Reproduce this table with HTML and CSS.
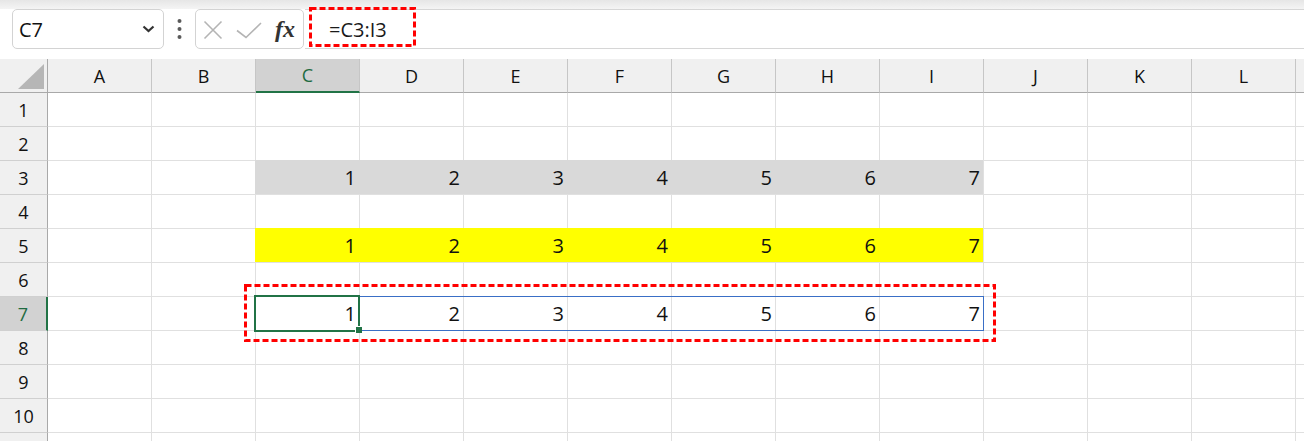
FILE: index.html
```html
<!DOCTYPE html>
<html lang="en">
<head>
    <meta charset="UTF-8">
    <title>Spill range</title>
    <link rel="stylesheet" href="styles.css">
</head>
<body>
    <div class="ribbon"></div>

    <div class="fbar">
        <div class="namebox">
            <span>C7</span>
            <svg class="chev" width="13" height="8" viewBox="0 0 13 8"><path d="M1.5 1.5 L6.5 6 L11.5 1.5" fill="none" stroke="#333" stroke-width="2.2"/></svg>
        </div>
        <div class="more">
            <svg width="5" height="22" viewBox="0 0 5 22"><circle cx="2.5" cy="3" r="2" fill="#5a5a5a"/><circle cx="2.5" cy="11" r="2" fill="#5a5a5a"/><circle cx="2.5" cy="19" r="2" fill="#5a5a5a"/></svg>
        </div>
        <div class="fxbox">
            <svg width="70" height="38" viewBox="0 0 70 38"><path d="M8.5 11.5 L25.5 28.5 M25.5 11.5 L8.5 28.5" stroke="#b4b4b4" stroke-width="1.6" fill="none"/><path d="M41 20.5 L50 27.5 L65 13" stroke="#b4b4b4" stroke-width="1.6" fill="none"/></svg>
            <span class="fx">fx</span>
        </div>
        <div class="formula">=C3:I3</div>
        <!-- annotation around the formula -->
        <svg class="mark mark-formula" width="107" height="40" viewBox="0 0 107 40"><rect x="1.5" y="1.5" width="104" height="37" fill="none" stroke="#ff0000" stroke-width="3" stroke-dasharray="6 3"/></svg>
    </div>

    <div class="gap"></div>

    <div class="sheet">
        <div class="corner"><span class="tri"></span></div>
        <div class="colh">A</div><div class="colh">B</div><div class="colh sel">C</div><div class="colh">D</div><div class="colh">E</div><div class="colh">F</div><div class="colh">G</div><div class="colh">H</div><div class="colh">I</div><div class="colh">J</div><div class="colh">K</div><div class="colh">L</div><div class="colh"></div>

        <div class="rowh">1</div><div class="c"></div><div class="c"></div><div class="c"></div><div class="c"></div><div class="c"></div><div class="c"></div><div class="c"></div><div class="c"></div><div class="c"></div><div class="c"></div><div class="c"></div><div class="c"></div><div class="c"></div>

        <div class="rowh">2</div><div class="c"></div><div class="c"></div><div class="c"></div><div class="c"></div><div class="c"></div><div class="c"></div><div class="c"></div><div class="c"></div><div class="c"></div><div class="c"></div><div class="c"></div><div class="c"></div><div class="c"></div>

        <div class="rowh">3</div><div class="c"></div><div class="c"></div><div class="c gray">1</div><div class="c gray">2</div><div class="c gray">3</div><div class="c gray">4</div><div class="c gray">5</div><div class="c gray">6</div><div class="c gray">7</div><div class="c"></div><div class="c"></div><div class="c"></div><div class="c"></div>

        <div class="rowh">4</div><div class="c"></div><div class="c"></div><div class="c"></div><div class="c"></div><div class="c"></div><div class="c"></div><div class="c"></div><div class="c"></div><div class="c"></div><div class="c"></div><div class="c"></div><div class="c"></div><div class="c"></div>

        <div class="rowh">5</div><div class="c"></div><div class="c"></div><div class="c yellow">1</div><div class="c yellow">2</div><div class="c yellow">3</div><div class="c yellow">4</div><div class="c yellow">5</div><div class="c yellow">6</div><div class="c yellow">7</div><div class="c"></div><div class="c"></div><div class="c"></div><div class="c"></div>

        <div class="rowh">6</div><div class="c"></div><div class="c"></div><div class="c"></div><div class="c"></div><div class="c"></div><div class="c"></div><div class="c"></div><div class="c"></div><div class="c"></div><div class="c"></div><div class="c"></div><div class="c"></div><div class="c"></div>

        <div class="rowh sel">7</div><div class="c"></div><div class="c"></div><div class="c">1</div><div class="c">2</div><div class="c">3</div><div class="c">4</div><div class="c">5</div><div class="c">6</div><div class="c">7</div><div class="c"></div><div class="c"></div><div class="c"></div><div class="c"></div>

        <div class="rowh">8</div><div class="c"></div><div class="c"></div><div class="c"></div><div class="c"></div><div class="c"></div><div class="c"></div><div class="c"></div><div class="c"></div><div class="c"></div><div class="c"></div><div class="c"></div><div class="c"></div><div class="c"></div>

        <div class="rowh">9</div><div class="c"></div><div class="c"></div><div class="c"></div><div class="c"></div><div class="c"></div><div class="c"></div><div class="c"></div><div class="c"></div><div class="c"></div><div class="c"></div><div class="c"></div><div class="c"></div><div class="c"></div>

        <div class="rowh">10</div><div class="c"></div><div class="c"></div><div class="c"></div><div class="c"></div><div class="c"></div><div class="c"></div><div class="c"></div><div class="c"></div><div class="c"></div><div class="c"></div><div class="c"></div><div class="c"></div><div class="c"></div>

        <div class="rowh"></div><div class="c"></div><div class="c"></div><div class="c"></div><div class="c"></div><div class="c"></div><div class="c"></div><div class="c"></div><div class="c"></div><div class="c"></div><div class="c"></div><div class="c"></div><div class="c"></div><div class="c"></div>

        <!-- spill range, active cell, annotation -->
        <div class="spill"></div>
        <div class="active"></div>
        <div class="handle"></div>
        <svg class="mark mark-range" width="752" height="58" viewBox="0 0 752 58"><rect x="1.5" y="1.5" width="749" height="55" fill="none" stroke="#ff0000" stroke-width="3" stroke-dasharray="6 3"/></svg>
    </div>
</body>
</html>
```

FILE: styles.css
```css
html, body {
    margin: 0;
    padding: 0;
    background: #ffffff;
    overflow: hidden;
}

body {
    width: 1304px;
    height: 441px;
    font-family: "Open Sans", "Noto Sans", sans-serif;
    color: #111;
}

.ribbon {
    height: 9px;
    background: linear-gradient(#e6e6e6, #f4f4f4);
}

/* formula bar */
.fbar {
    position: relative;
    display: flex;
    height: 40px;
    background: #ffffff;
}

.namebox {
    box-sizing: border-box;
    width: 152px;
    margin-left: 12px;
    display: flex;
    align-items: center;
    padding: 0 8px 0 6px;
    border: 1px solid #d3d3d3;
    border-radius: 5px;
    font-size: 20px;
}

.chev {
    margin-left: auto;
}

.more {
    width: 31px;
    display: flex;
    align-items: center;
    justify-content: center;
}

.fxbox {
    box-sizing: border-box;
    width: 109px;
    display: flex;
    align-items: center;
    border: 1px solid #d3d3d3;
    border-radius: 5px;
}

.fx {
    margin-left: 9px;
    font-family: "Liberation Serif", serif;
    font-style: italic;
    font-weight: bold;
    font-size: 24px;
    color: #333;
}

.formula {
    flex: 1;
    margin-left: 1px;
    padding-left: 24px;
    display: flex;
    align-items: center;
    border-top: 1px solid #d6d6d6;
    border-bottom: 1px solid #d6d6d6;
    font-size: 20px;
    color: #1a1a1a;
}

.mark {
    position: absolute;
}

.mark-formula {
    left: 309px;
    top: -2px;
}

.gap {
    height: 10px;
}

/* grid */
.sheet {
    position: relative;
    display: grid;
    grid-template-columns: 48px repeat(13, 104px);
    grid-auto-rows: 34px;
}

.corner, .colh, .rowh, .c {
    box-sizing: border-box;
}

.corner {
    position: relative;
    background: #f0f0f0;
    border-right: 1px solid #a9a9a9;
    border-bottom: 1px solid #a9a9a9;
}

.tri {
    position: absolute;
    right: 3px;
    bottom: 3px;
    width: 26px;
    height: 25px;
    background: #b6b6b6;
    clip-path: polygon(100% 0, 100% 100%, 0 100%);
}

.colh {
    display: flex;
    align-items: center;
    justify-content: center;
    background: #f0f0f0;
    border-right: 1px solid #c6c6c6;
    border-bottom: 1px solid #a9a9a9;
    font-size: 18px;
}

.colh.sel {
    background: #d2d2d2;
    color: #1e6b41;
    border-bottom: 2px solid #217346;
}

.rowh {
    display: flex;
    align-items: center;
    justify-content: center;
    background: #f0f0f0;
    border-right: 1px solid #a9a9a9;
    border-bottom: 1px solid #d0d0d0;
    font-size: 18px;
}

.rowh.sel {
    background: #d2d2d2;
    color: #1e6b41;
    border-right: 2px solid #217346;
}

.c {
    display: flex;
    align-items: center;
    justify-content: flex-end;
    padding-right: 3px;
    border-right: 1px solid #e0e0e0;
    border-bottom: 1px solid #e0e0e0;
    font-size: 20px;
    color: #111;
}

.c.gray {
    background: #d9d9d9;
    box-shadow: -1px -1px 0 #d9d9d9;
}

.c.yellow {
    background: #ffff00;
    box-shadow: -1px -1px 0 #ffff00;
}

.spill {
    position: absolute;
    left: 255px;
    top: 237px;
    width: 729px;
    height: 35px;
    box-sizing: border-box;
    border: 1px solid #3a6fc6;
}

.active {
    position: absolute;
    left: 254px;
    top: 236px;
    width: 106px;
    height: 37px;
    box-sizing: border-box;
    border: 2px solid #217346;
}

.handle {
    position: absolute;
    left: 355px;
    top: 267px;
    width: 6px;
    height: 6px;
    background: #217346;
    border-left: 1px solid #ffffff;
    border-top: 1px solid #ffffff;
}

.mark-range {
    left: 244px;
    top: 225px;
}
```
